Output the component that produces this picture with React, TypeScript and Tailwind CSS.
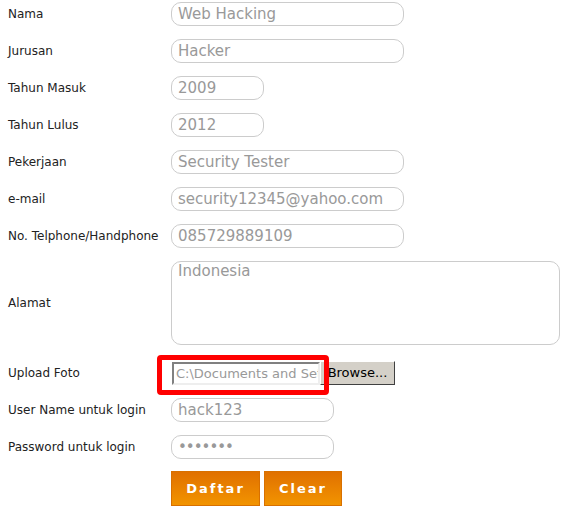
import React from "react";

const inp = "h-[24px] rounded-[10px] border border-[#cccccc] bg-white px-[6px] text-[15px] text-[#999999] outline-none";

function Row({ label, children, h = "h-[24px]" }: { label: string; children: React.ReactNode; h?: string }) {
  return (
    <div className={`flex items-center ${h}`}>
      <div className="w-[171px] shrink-0 pl-[8px] text-[12px] text-[#222]">{label}</div>
      {children}
    </div>
  );
}

export default function App() {
  return (
    <div className="w-[569px] h-[513px] bg-white pt-[2px] flex flex-col" style={{ fontFamily: '"DejaVu Sans", Verdana, sans-serif' }}>
      <div className="flex flex-col gap-[13px]">
        <Row label="Nama"><input className={`${inp} w-[233px]`} defaultValue="Web Hacking" /></Row>
        <Row label="Jurusan"><input className={`${inp} w-[233px]`} defaultValue="Hacker" /></Row>
        <Row label="Tahun Masuk"><input className={`${inp} w-[93px]`} defaultValue="2009" /></Row>
        <Row label="Tahun Lulus"><input className={`${inp} w-[93px]`} defaultValue="2012" /></Row>
        <Row label="Pekerjaan"><input className={`${inp} w-[233px]`} defaultValue="Security Tester" /></Row>
        <Row label="e-mail"><input className={`${inp} w-[233px]`} defaultValue="security12345@yahoo.com" /></Row>
        <Row label="No. Telphone/Handphone"><input className={`${inp} w-[233px]`} defaultValue="085729889109" /></Row>
        <Row label="Alamat" h="h-[84px]">
          <textarea className="h-[84px] w-[389px] rounded-[10px] border border-[#cccccc] px-[6px] pt-0 leading-[18px] text-[15px] text-[#999999] outline-none resize-none" defaultValue="Indonesia" />
        </Row>
      </div>
      <div className="mt-[16px] flex flex-col gap-[13px]">
        <Row label="Upload Foto">
          <div className="relative flex items-center">
            <div className="absolute left-[-14px] top-[-6px] h-[40px] w-[172px] rounded-[4px] border-[5px] border-[#ff0000]" />
            <div className="ml-[1px] h-[23px] w-[148px] overflow-hidden whitespace-nowrap border-2 border-t-[#808080] border-l-[#808080] border-b-[#eeeeee] border-r-[#eeeeee] bg-white pl-[2px] text-[13px] leading-[19px] text-[#999]">C:\Documents and Settings</div>
            <div className="h-[24px] w-[75px] border border-t-white border-l-white border-b-[#404040] border-r-[#404040] bg-[#d4d0c8] text-center text-[13px] leading-[22px] text-black">Browse...</div>
          </div>
        </Row>
        <Row label="User Name untuk login"><input className={`${inp} w-[163px]`} defaultValue="hack123" /></Row>
        <Row label="Password untuk login"><input type="password" className={`${inp} w-[163px] text-[13px] tracking-[-1px]`} defaultValue="1234567" /></Row>
      </div>
      <div className="mt-[12px] flex gap-[4px] pl-[171px]">
        <button className="h-[35px] w-[89px] border border-[#d87000] bg-gradient-to-b from-[#e07000] to-[#f29400] text-[13px] font-bold tracking-[2px] text-white">Daftar</button>
        <button className="h-[35px] w-[78px] border border-[#d87000] bg-gradient-to-b from-[#e07000] to-[#f29400] text-[13px] font-bold tracking-[2px] text-white">Clear</button>
      </div>
    </div>
  );
}
